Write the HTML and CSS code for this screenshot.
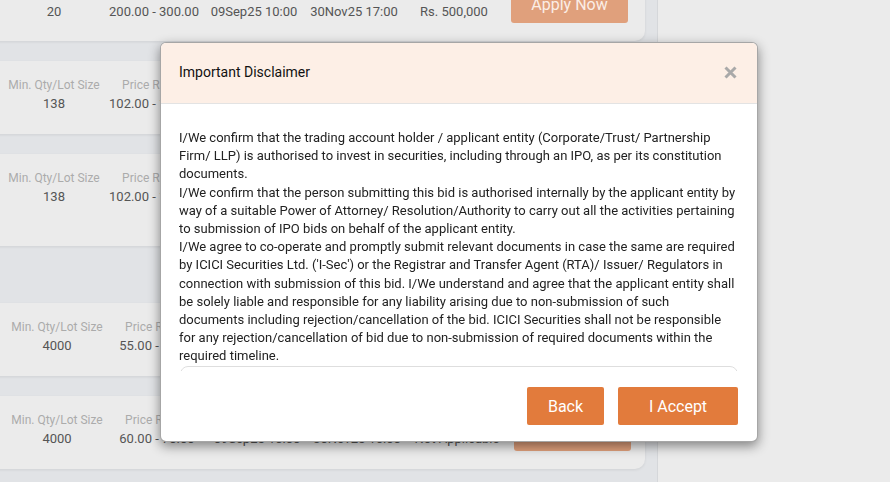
FILE: index.html
```html
<!DOCTYPE html>
<html lang="en">
<head>
<meta charset="utf-8">
<title>Important Disclaimer</title>
<link rel="stylesheet" href="styles.css">
</head>
<body>
<div class="page">
  <main class="list">
    <div class="card card-first">
      <div class="col"><div class="value">20</div></div>
      <div class="col"><div class="value">200.00 - 300.00</div></div>
      <div class="col"><div class="value">09Sep25 10:00</div></div>
      <div class="col"><div class="value">30Nov25 17:00</div></div>
      <div class="col"><div class="value">Rs. 500,000</div></div>
      <button class="apply">Apply Now</button>
    </div>
    <div class="card">
      <div class="col"><div class="label">Min. Qty/Lot Size</div><div class="value">138</div></div>
      <div class="col"><div class="label">Price Range</div><div class="value">102.00 - 108.00</div></div>
    </div>
    <div class="card card-tall">
      <div class="col"><div class="label">Min. Qty/Lot Size</div><div class="value">138</div></div>
      <div class="col"><div class="label">Price Range</div><div class="value">102.00 - 108.00</div></div>
    </div>
    <div class="card card-alt card-section">
      <div class="col"><div class="label">Min. Qty/Lot Size</div><div class="value">4000</div></div>
      <div class="col"><div class="label">Price Range</div><div class="value">55.00 - 65.00</div></div>
    </div>
    <div class="card card-alt card-last">
      <div class="col"><div class="label">Min. Qty/Lot Size</div><div class="value">4000</div></div>
      <div class="col"><div class="label">Price Range</div><div class="value">60.00 - 70.00</div></div>
      <div class="col"><div class="label">&nbsp;</div><div class="value">09Sep25 10:00</div></div>
      <div class="col"><div class="label">&nbsp;</div><div class="value">30Nov25 16:00</div></div>
      <div class="col"><div class="label">&nbsp;</div><div class="value">Not Applicable</div></div>
      <button class="apply">Apply Now</button>
    </div>
  </main>
  <aside class="side"></aside>
</div>

<div class="overlay">
  <div class="modal" role="dialog" aria-labelledby="modal-title">
    <div class="modal-header">
      <h4 class="modal-title" id="modal-title">Important Disclaimer</h4>
      <button class="close" aria-label="Close">
        <svg width="13" height="13" viewBox="0 0 13 13"><path d="M1.5 1.5 L11.5 11.5 M11.5 1.5 L1.5 11.5" stroke="#a9a9a9" stroke-width="3" stroke-linecap="butt"/></svg>
      </button>
    </div>
    <div class="modal-body">
      <div class="disclaimer">
        I/We confirm that the trading account holder / applicant entity (Corporate/Trust/ Partnership Firm/ LLP) is authorised to invest in securities, including through an IPO, as per its constitution documents.<br>
        I/We confirm that the person submitting this bid is authorised internally by the applicant entity by way of a suitable Power of Attorney/ Resolution/Authority to carry out all the activities pertaining to submission of IPO bids on behalf of the applicant entity.<br>
        I/We agree to co-operate and promptly submit relevant documents in case the same are required by ICICI Securities Ltd. ('I-Sec') or the Registrar and Transfer Agent (RTA)/ Issuer/ Regulators in connection with submission of this bid. I/We understand and agree that the applicant entity shall be solely liable and responsible for any liability arising due to non-submission of such documents including rejection/cancellation of the bid. ICICI Securities shall not be responsible for any rejection/cancellation of bid due to non-submission of required documents within the required timeline.
      </div>
      <div class="consent-box"></div>
    </div>
    <div class="modal-footer">
      <button class="btn">Back</button>
      <button class="btn btn-accept">I Accept</button>
    </div>
  </div>
</div>
</body>
</html>
```

FILE: styles.css
```css
* { box-sizing: border-box; }

html, body {
  margin: 0;
  padding: 0;
  width: 890px;
  height: 482px;
  overflow: hidden;
  font-family: Roboto, "Liberation Sans", Arial, sans-serif;
}

.page {
  display: flex;
  height: 482px;
}

.list {
  width: 658px;
  flex: none;
  background: #e1e3e6;
  border-right: 1px solid #d5d7da;
  display: flex;
  flex-direction: column;
  gap: 20px;
  padding-right: 12px;
  overflow: hidden;
}

.side {
  flex: 1;
  background: #ebebeb;
}

.card {
  flex: none;
  height: 73px;
  margin-left: -10px;
  background: #ebebeb;
  border-radius: 0 10px 10px 0;
  box-shadow: 0 1px 3px rgba(0, 0, 0, 0.08);
  display: flex;
  align-items: flex-start;
  padding: 16px 0 0 14px;
}

.card-first {
  margin-top: -32px;
  padding-top: 33px;
}
.card-first .apply { margin-top: -16px; }
.card-last .apply { margin-top: 1px; }
.card-tall { height: 92px; }
.card-section { margin-top: 37px; }
.card-alt { padding-left: 17px; }

.col {
  width: 100px;
  flex: none;
  text-align: center;
  white-space: nowrap;
}

.label {
  font-size: 12px;
  line-height: 16px;
  color: #ababab;
}

.value {
  margin-top: 2px;
  font-size: 13px;
  line-height: 18px;
  color: #555;
}

.apply {
  margin-left: 7px;
  margin-top: 2px;
  width: 117px;
  height: 38px;
  border: none;
  border-radius: 3px;
  background: #e0a07c;
  color: #fbeee6;
  font-family: inherit;
  font-size: 16px;
}

/* Modal */
.overlay {
  position: fixed;
  inset: 0;
  padding: 42px 0 0 160px;
}

.modal {
  width: 598px;
  height: 400px;
  background: #fff;
  border: 1px solid rgba(0, 0, 0, 0.35);
  border-radius: 6px;
  box-shadow: 0 4px 12px rgba(0, 0, 0, 0.45);
  overflow: hidden;
  display: flex;
  flex-direction: column;
}

.modal-header {
  flex: none;
  height: 61px;
  background: #fdefe6;
  border-bottom: 1px solid #e3e3e3;
  display: flex;
  align-items: center;
  justify-content: space-between;
  padding: 0 20px 1px 18px;
}

.modal-title {
  margin: 0 0 1px;
  font-size: 14px;
  font-weight: 400;
  color: #111;
}

.close {
  border: none;
  background: none;
  padding: 0;
  width: 13px;
  height: 13px;
  display: flex;
}

.modal-body {
  flex: none;
  height: 267px;
  overflow: hidden;
  padding: 25px 19px 0 18px;
}

.disclaimer {
  width: 558px;
  font-size: 13px;
  line-height: 18.2px;
  color: #222;
}

.consent-box {
  margin: 0 0 0 1px;
  width: 558px;
  height: 30px;
  border: 1px solid #dedede;
  border-radius: 8px;
}

.modal-footer {
  flex: 1;
  display: flex;
  justify-content: flex-end;
  align-items: flex-start;
  gap: 14px;
  padding: 16px 19px 0 0;
}

.btn {
  height: 38px;
  width: 77px;
  border: none;
  border-radius: 2px;
  background: #e27b3c;
  color: #fff;
  font-family: inherit;
  font-size: 16px;
}

.btn-accept { width: 120px; }
```
